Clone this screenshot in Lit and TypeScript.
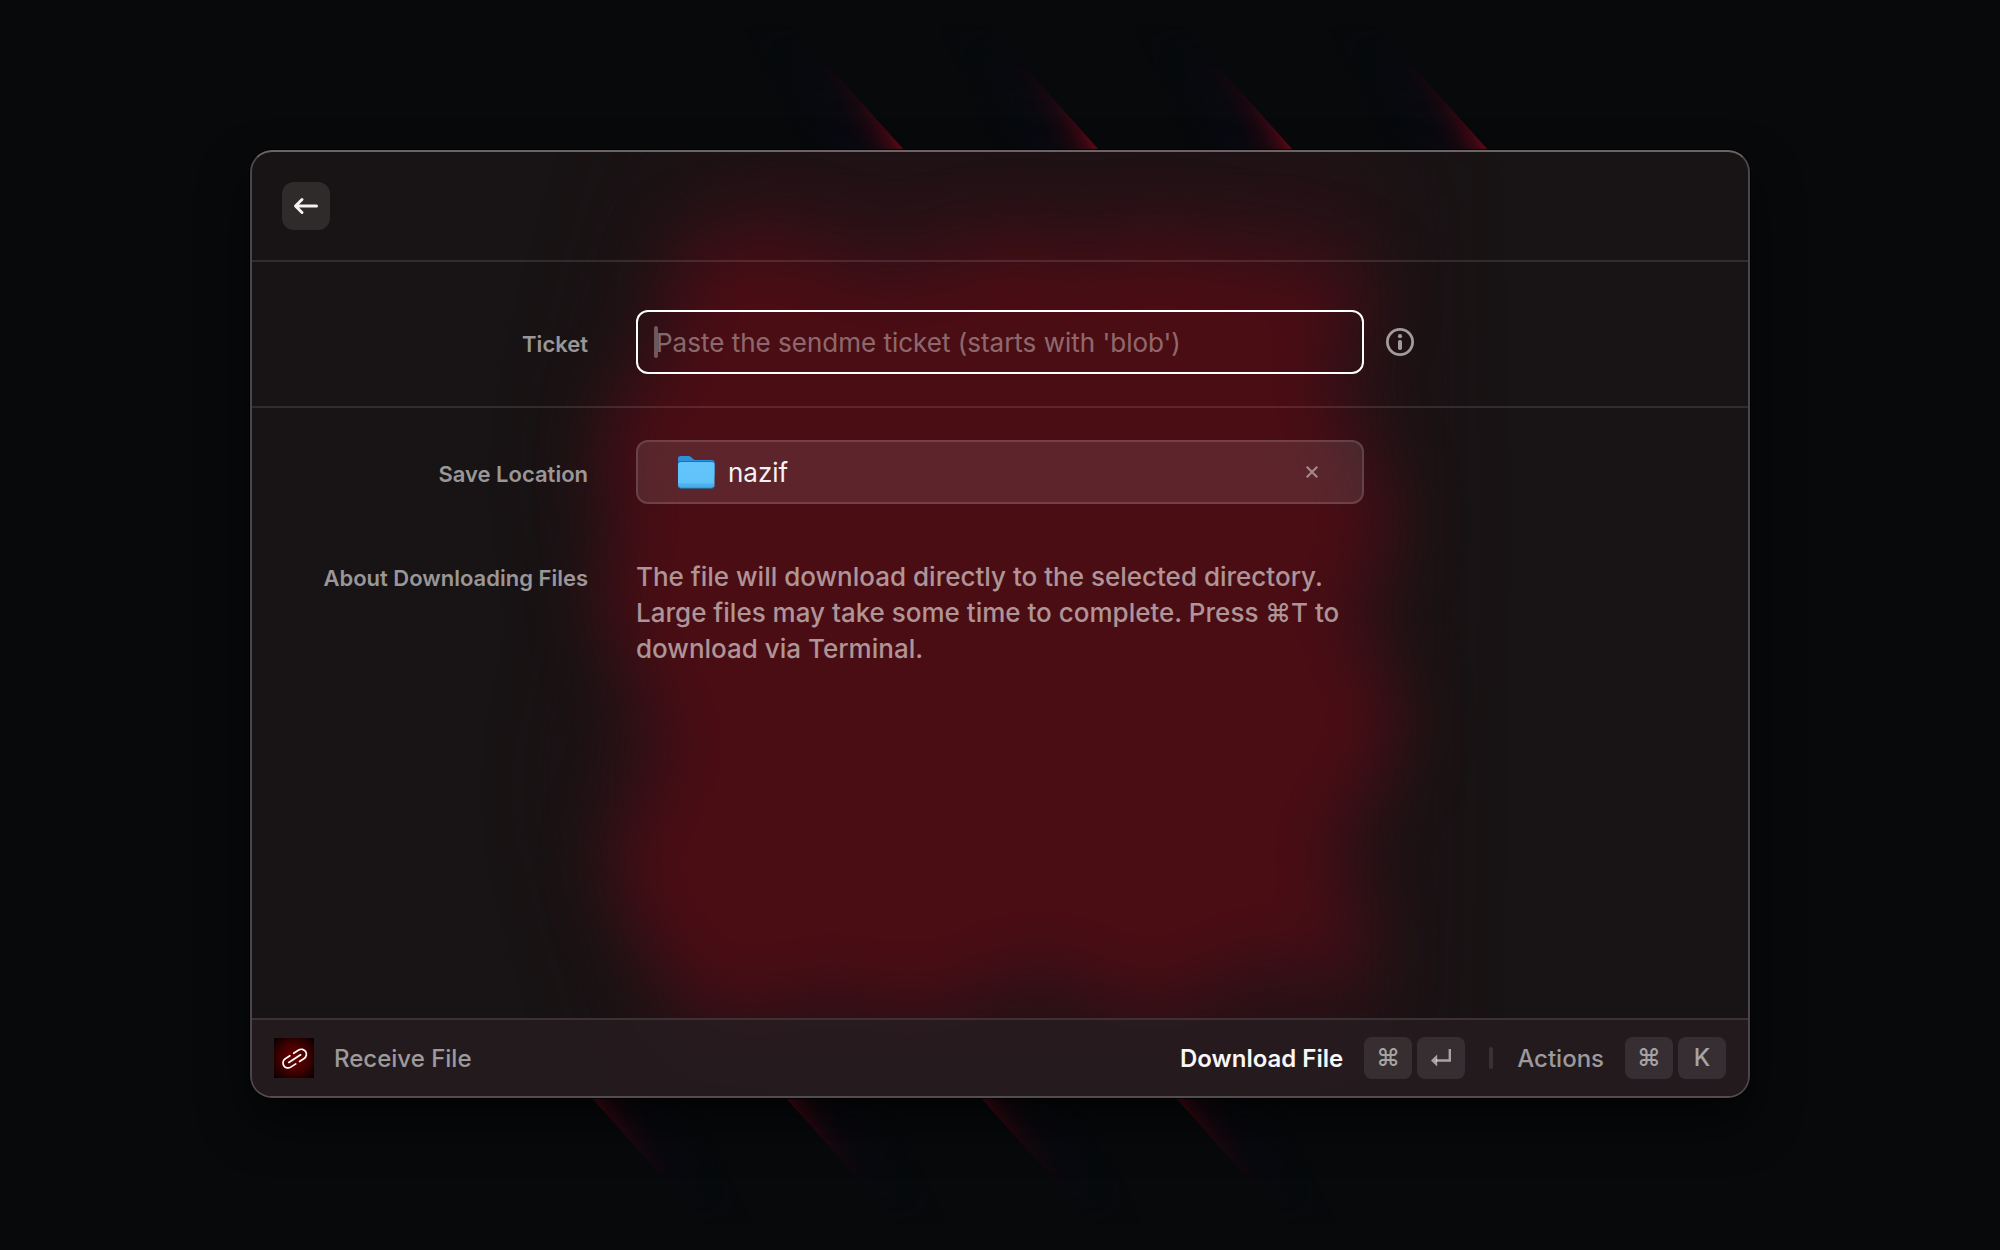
import { LitElement, html, svg, css } from "lit";
import { customElement, state } from "lit/decorators.js";

const TOP_BEAMS = [903, 1098, 1292, 1487];
const BOTTOM_BEAMS = [592, 786, 981, 1176];

@customElement("wallpaper-beams")
class WallpaperBeams extends LitElement {
  static styles = css`
    :host {
      display: block;
      min-width: 0;
      min-height: 0;
      overflow: hidden;
    }
    .art {
      display: block;
      width: 100%;
      height: 100%;
    }
  `;

  render() {
    return html`
      <svg class="art" viewBox="0 0 2000 1250" preserveAspectRatio="xMidYMid slice" aria-hidden="true">
        <defs>
          <linearGradient id="beam" gradientUnits="userSpaceOnUse" x1="0" y1="0" x2="-83" y2="40">
            <stop offset="0" stop-color="#680a19" />
            <stop offset="0.1" stop-color="#3c0914" />
            <stop offset="0.24" stop-color="#1c0811" />
            <stop offset="0.42" stop-color="#0b0910" />
            <stop offset="0.6" stop-color="#080a10" />
            <stop offset="1" stop-color="#07090c" stop-opacity="0" />
          </linearGradient>
          <linearGradient id="fadeUp" gradientUnits="userSpaceOnUse" x1="0" y1="150" x2="0" y2="25">
            <stop offset="0" stop-color="#fff" />
            <stop offset="0.5" stop-color="#bbb" />
            <stop offset="1" stop-color="#000" />
          </linearGradient>
          <linearGradient id="fadeDown" gradientUnits="userSpaceOnUse" x1="0" y1="1098" x2="0" y2="1225">
            <stop offset="0" stop-color="#ccc" />
            <stop offset="0.5" stop-color="#999" />
            <stop offset="1" stop-color="#000" />
          </linearGradient>
          <mask id="topMask" maskUnits="userSpaceOnUse" x="0" y="0" width="2000" height="160">
            <rect width="2000" height="160" fill="url(#fadeUp)" />
          </mask>
          <mask id="bottomMask" maskUnits="userSpaceOnUse" x="0" y="1090" width="2000" height="160">
            <rect y="1090" width="2000" height="160" fill="url(#fadeDown)" />
          </mask>
        </defs>
        <g mask="url(#topMask)">
          ${TOP_BEAMS.map(
            (x) => svg`<path transform=${`translate(${x} 149)`} d="M9 10-133-149H-230L-120 10z" fill="url(#beam)" />`
          )}
        </g>
        <g mask="url(#bottomMask)">
          ${BOTTOM_BEAMS.map(
            (x) => svg`<path transform=${`translate(${x} 1098) rotate(180)`} d="M9 10-133-149H-230L-120 10z" fill="url(#beam)" />`
          )}
        </g>
      </svg>
    `;
  }
}

@customElement("panel-glow")
class PanelGlow extends LitElement {
  static styles = css`
    :host {
      display: block;
      min-width: 0;
      min-height: 0;
      overflow: hidden;
    }
    .art {
      display: block;
      width: 100%;
      height: 100%;
    }
  `;

  render() {
    return html`
      <svg class="art" viewBox="0 0 1496 944" preserveAspectRatio="none" aria-hidden="true">
        <defs>
          <filter id="wide" filterUnits="userSpaceOnUse" x="-100" y="-300" width="1700" height="1500" color-interpolation-filters="sRGB">
            <feGaussianBlur stdDeviation="50" />
          </filter>
          <filter id="soft" filterUnits="userSpaceOnUse" x="0" y="-200" width="1500" height="1400" color-interpolation-filters="sRGB">
            <feGaussianBlur stdDeviation="36" />
          </filter>
        </defs>
        <path
          filter="url(#wide)"
          fill="#281117"
          d="M430 10H1130L1140 350 1130 930H420L340 640 380 480 350 330 380 180z"
        />
        <path
          filter="url(#soft)"
          fill="#4b0d14"
          d="M425 115Q500 65 570 100 640 140 700 105 790 70 830 115 900 65 960 105 1040 95 1120 140
             L1075 200Q1075 240 1095 290 1165 370 1105 430 1085 470 1130 530 1165 590 1095 650 1060 710 1105 770
             L1115 825Q1000 790 960 830 900 880 840 830 780 795 720 840 640 880 590 830 500 880 430 840
             L385 760Q340 710 400 640 430 580 380 510 330 440 380 370 325 290 395 230 435 170 425 115z"
        />
      </svg>
    `;
  }
}

@customElement("app-root")
class AppRoot extends LitElement {
  @state() private ticket = "";
  @state() private folder = "nazif";

  static styles = css`
    :host {
      display: block;
      font-family: Inter, "Liberation Sans", sans-serif;
      font-optical-sizing: none;
      --text-muted: rgba(255, 255, 255, 0.56);
      --line: rgba(255, 255, 255, 0.11);
    }
    * {
      box-sizing: border-box;
    }
    button,
    input {
      margin: 0;
      border: 0;
      padding: 0;
      background: none;
      color: inherit;
      font: inherit;
    }
    .desktop {
      display: grid;
      grid-template: minmax(100vh, auto) / minmax(0, 1fr);
      background: #07090b;
    }
    .wallpaper,
    .stage {
      grid-area: 1 / 1;
    }
    .wallpaper {
      contain: size;
    }
    .stage {
      display: flex;
      padding: 150px 12.5% 152px;
      z-index: 1;
    }
    .window {
      flex: 1;
      min-width: 0;
      display: grid;
      grid-template-columns: minmax(0, 1fr);
      border: 2px solid;
      border-color: #6b6465 #4a4546 #544c4e;
      border-radius: 22px;
      overflow: hidden;
      background: #181314;
      box-shadow:
        0 0 0 1px #000,
        0 24px 48px rgba(0, 0, 0, 0.6);
    }
    .glow,
    .content {
      grid-area: 1 / 1;
    }
    .glow {
      contain: size;
    }
    .content {
      display: flex;
      flex-direction: column;
      z-index: 1;
    }
    .header {
      padding: 30px;
      border-bottom: 2px solid var(--line);
    }
    .back {
      display: grid;
      place-items: center;
      width: 48px;
      height: 48px;
      border-radius: 12px;
      background: rgba(255, 255, 255, 0.1);
      color: #f4f2f2;
    }
    .form {
      flex: 1;
    }
    .section {
      padding: 32px 0;
    }
    .section.first {
      padding-top: 48px;
      border-bottom: 2px solid var(--line);
    }
    .row {
      display: grid;
      grid-template-columns: minmax(0, 1fr) minmax(0, 728px) minmax(0, 1fr);
      align-items: baseline;
    }
    .row + .row {
      margin-top: 55px;
    }
    .label {
      margin: 0;
      padding-right: 48px;
      text-align: right;
      font-size: 22px;
      line-height: 36px;
      font-weight: 600;
      color: var(--text-muted);
    }
    .ticket {
      position: relative;
    }
    .ticket-input {
      display: block;
      width: 100%;
      height: 64px;
      padding: 0 18px;
      border: 2px solid #fff;
      border-radius: 12px;
      color: #f4f2f2;
      font-size: 26px;
      outline: none;
      caret-color: transparent;
    }
    .ticket-input::placeholder {
      color: rgba(255, 255, 255, 0.4);
      opacity: 1;
    }
    .caret {
      position: absolute;
      left: 18px;
      top: 16px;
      width: 4px;
      height: 32px;
      border-radius: 2px;
      background: rgba(255, 255, 255, 0.3);
    }
    .info {
      align-self: center;
      justify-self: start;
      display: grid;
      margin-left: 22px;
      color: rgba(255, 255, 255, 0.58);
    }
    .location {
      display: flex;
      align-items: center;
      height: 64px;
      border: 2px solid rgba(255, 255, 255, 0.22);
      border-radius: 12px;
      background: rgba(255, 255, 255, 0.1);
      background-clip: padding-box;
    }
    .choose {
      flex: 1;
      display: flex;
      align-items: baseline;
      gap: 13px;
      padding-left: 39px;
      font-size: 26px;
      line-height: 36px;
      color: #f4f2f2;
      text-align: left;
    }
    .folder {
      align-self: center;
    }
    .folder-name {
      padding-top: 2px;
    }
    .clear {
      display: grid;
      place-items: center;
      width: 32px;
      height: 32px;
      margin-right: 34px;
      color: rgba(255, 255, 255, 0.45);
    }
    .about {
      margin: 0;
      font-size: 26px;
      line-height: 36px;
      font-weight: 500;
      color: var(--text-muted);
    }
    .footer {
      display: flex;
      align-items: center;
      height: 78px;
      padding: 0 22px;
      border-top: 2px solid rgba(255, 255, 255, 0.1);
      background: rgba(39, 29, 32, 0.8);
      font-size: 24px;
      line-height: 32px;
      font-weight: 500;
      color: rgba(255, 255, 255, 0.56);
    }
    .name {
      margin-left: 20px;
    }
    .name,
    .verb {
      padding-top: 2px;
    }
    .actions {
      display: flex;
      align-items: center;
      margin-left: auto;
    }
    .action {
      display: flex;
      align-items: center;
      gap: 21px;
    }
    .action.primary {
      font-weight: 600;
      color: #f8f6f6;
    }
    .keys {
      display: flex;
      gap: 5px;
    }
    .key {
      display: grid;
      place-items: center;
      width: 48px;
      height: 42px;
      border-radius: 8px;
      background: rgba(255, 255, 255, 0.09);
      color: rgba(255, 255, 255, 0.56);
      font-family: inherit;
      font-size: 24px;
      line-height: 32px;
      font-weight: 500;
    }
    .divider {
      width: 4px;
      height: 22px;
      margin: 0 24px;
      border-radius: 2px;
      background: rgba(255, 255, 255, 0.1);
    }
  `;

  private onTicket(e: Event) {
    this.ticket = (e.target as HTMLInputElement).value;
  }

  private clearFolder() {
    this.folder = "";
  }

  private folderIcon() {
    return html`
      <svg class="folder" width="38" height="34" viewBox="0 0 38 34" aria-hidden="true">
        <defs>
          <linearGradient id="front" x1="0" y1="0" x2="0" y2="1">
            <stop offset="0" stop-color="#62c4fb" />
            <stop offset="0.8" stop-color="#5fc2f9" />
            <stop offset="0.84" stop-color="#4fb3ee" />
            <stop offset="1" stop-color="#46a9e6" />
          </linearGradient>
        </defs>
        <path d="M1 3.5Q1 1 3.500 1H11.500Q13 1 14 2L16.500 4.200Q17.200 5 18.500 5H35Q37.500 5 37.500 7.500V20H1z" fill="#2f8fd8" />
        <path d="M1 6H37.500V12H1z" fill="#1b6fbe" />
        <rect x="1" y="7" width="36.500" height="26" rx="2.500" fill="url(#front)" />
        <path d="M1.500 31.500Q2.200 33.300 4 33.300H34.500Q36.500 33.300 37 31.500" fill="none" stroke="#2a6f9f" stroke-width="1" />
      </svg>
    `;
  }

  private linkIcon() {
    return html`
      <svg width="40" height="40" viewBox="0 0 40 40" aria-hidden="true">
        <defs>
          <radialGradient id="ember" cx="0.5" cy="0.5" r="0.68">
            <stop offset="0" stop-color="#6c0000" />
            <stop offset="0.45" stop-color="#4a0000" />
            <stop offset="1" stop-color="#0a0000" />
          </radialGradient>
        </defs>
        <rect width="40" height="40" fill="url(#ember)" />
        <g transform="translate(20.700 20.600) rotate(-33)" fill="none" stroke="#fff" stroke-width="1.700" stroke-linecap="round">
          <path d="M-7 0H7" />
          <path d="M-2.500-5H-8A5 5 0 0 0-8 5H-2" />
          <path d="M2.500 5H8A5 5 0 0 0 8-5H2" />
        </g>
      </svg>
    `;
  }

  render() {
    return html`
      <div class="desktop">
        <wallpaper-beams class="wallpaper"></wallpaper-beams>
        <div class="stage">
          <main class="window">
            <panel-glow class="glow"></panel-glow>
            <div class="content">
              <header class="header">
                <button class="back" type="button" aria-label="Back">
                  <svg width="28" height="20" viewBox="0 0 28 20" fill="none" stroke="currentColor" stroke-width="3" stroke-linecap="round" stroke-linejoin="round" aria-hidden="true">
                    <path d="M24.500 10H4M10 3.500 3.500 10 10 16.500" />
                  </svg>
                </button>
              </header>
              <form class="form" @submit=${(e: Event) => e.preventDefault()}>
                <div class="section first">
                  <div class="row">
                    <label class="label" for="ticket">Ticket</label>
                    <div class="ticket">
                      <input
                        class="ticket-input"
                        id="ticket"
                        type="text"
                        autocomplete="off"
                        placeholder="Paste the sendme ticket (starts with 'blob')"
                        .value=${this.ticket}
                        @input=${this.onTicket}
                      />
                      ${this.ticket ? null : html`<span class="caret"></span>`}
                    </div>
                    <button class="info" type="button" aria-label="About tickets">
                      <svg width="28" height="28" viewBox="0 0 28 28" aria-hidden="true">
                        <circle cx="14" cy="14" r="12.600" fill="none" stroke="currentColor" stroke-width="2.800" />
                        <circle cx="14" cy="8.200" r="2.100" fill="currentColor" />
                        <rect x="12" y="12" width="4" height="10" rx="1.800" fill="currentColor" />
                      </svg>
                    </button>
                  </div>
                </div>
                <div class="section">
                  <div class="row">
                    <label class="label" for="location">Save Location</label>
                    <div class="location">
                      <button class="choose" id="location" type="button">
                        ${this.folder ? this.folderIcon() : null}<span class="folder-name">${this.folder}</span>
                      </button>
                      <button class="clear" type="button" aria-label="Clear save location" @click=${this.clearFolder}>
                        <svg width="12" height="12" viewBox="0 0 12 12" stroke="currentColor" stroke-width="2.200" aria-hidden="true">
                          <path d="M.7.7 11.300 11.300M11.300.7.7 11.300" />
                        </svg>
                      </button>
                    </div>
                  </div>
                  <div class="row">
                    <h2 class="label">About Downloading Files</h2>
                    <p class="about">
                      The file will download directly to the selected directory. Large files may take some time to
                      complete. Press ⌘T to download via Terminal.
                    </p>
                  </div>
                </div>
              </form>
              <footer class="footer">
                ${this.linkIcon()}
                <span class="name">Receive File</span>
                <div class="actions">
                  <button class="action primary" type="button">
                    <span class="verb">Download File</span>
                    <span class="keys">
                      <kbd class="key">⌘</kbd>
                      <kbd class="key">
                        <svg width="20" height="18" viewBox="0 0 20 18" aria-hidden="true">
                          <path d="M18.800 0V11.500H5" fill="none" stroke="currentColor" stroke-width="2.400" />
                          <path d="M6.200 5.600V17.400L0 11.500z" fill="currentColor" />
                        </svg>
                      </kbd>
                    </span>
                  </button>
                  <span class="divider"></span>
                  <button class="action" type="button">
                    <span class="verb">Actions</span>
                    <span class="keys">
                      <kbd class="key">⌘</kbd>
                      <kbd class="key">K</kbd>
                    </span>
                  </button>
                </div>
              </footer>
            </div>
          </main>
        </div>
      </div>
    `;
  }
}
